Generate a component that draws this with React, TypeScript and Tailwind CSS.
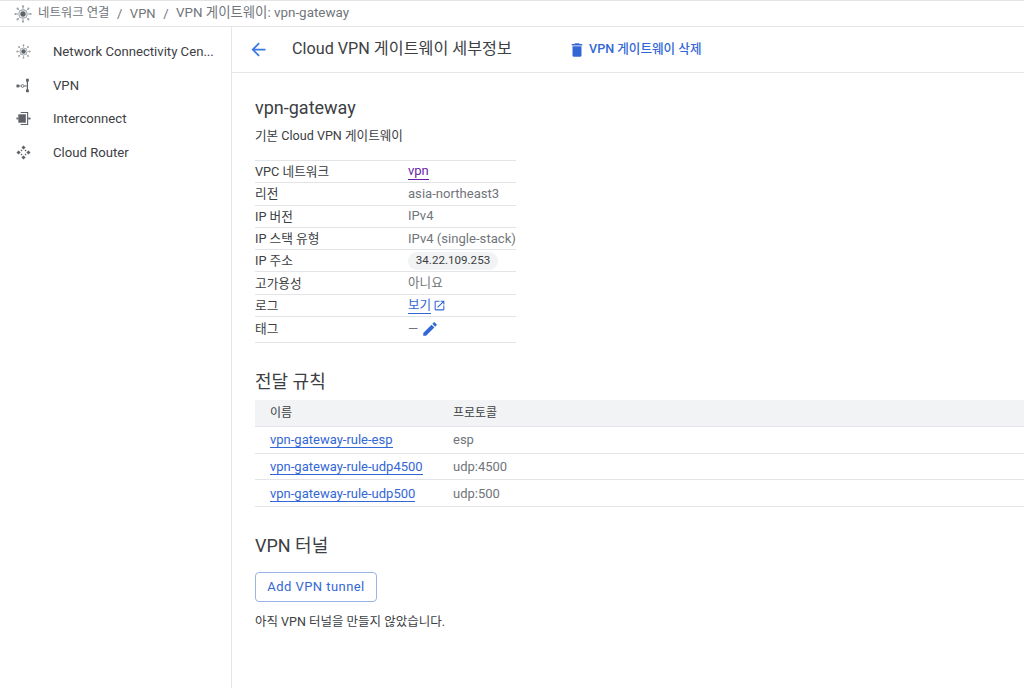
import type { ReactNode } from 'react';

const font = { fontFamily: 'Roboto, "Noto Sans CJK KR", sans-serif' };

function HubIcon({ className }: { className?: string }) {
  return (
    <svg viewBox="0 0 20 20" className={className} fill="none" stroke="currentColor">
      <circle cx="10" cy="10" r="4.6" strokeWidth="1.2" />
      <circle cx="10" cy="10" r="3" fill="#5f6368" stroke="none" />
      <path strokeWidth="1" d="M10 1.5v3M10 15.5v3M1.5 10h3M15.5 10h3M4 4l2.100 2.100M13.900 13.900L16 16M16 4l-2.100 2.100M6.100 13.900L4 16" />
      <g fill="currentColor" stroke="none">
        <circle cx="10" cy="1.6" r="1.2" />
        <circle cx="10" cy="18.4" r="1.2" />
        <circle cx="1.6" cy="10" r="1.2" />
        <circle cx="18.4" cy="10" r="1.2" />
        <circle cx="4" cy="4" r="1.2" />
        <circle cx="16" cy="16" r="1.2" />
        <circle cx="16" cy="4" r="1.2" />
        <circle cx="4" cy="16" r="1.2" />
      </g>
    </svg>
  );
}

function VpnIcon({ className }: { className?: string }) {
  return (
    <svg viewBox="0 0 16 16" className={className} fill="currentColor">
      <rect x="0.5" y="7" width="3" height="3" />
      <path d="M3.5 8h1.500v1H3.500z" />
      <circle cx="7" cy="8.5" r="1.5" fill="none" stroke="currentColor" strokeWidth="0.9" />
      <path d="M8.500 8h3v1h-3z" />
      <rect x="11.5" y="2" width="1.3" height="12" />
      <rect x="10.7" y="0.8" width="3" height="3" />
      <rect x="10.7" y="12.2" width="3" height="3" />
    </svg>
  );
}

function InterconnectIcon({ className }: { className?: string }) {
  return (
    <svg viewBox="0 0 16 16" className={className} fill="currentColor">
      <rect x="2.5" y="3.5" width="8" height="9" />
      <path d="M0.500 7h2v2h-2z" />
      <path d="M5 1h8v14H5v-1.200h6.800V2.200H5z" />
      <path d="M13 7h2.500v2H13z" />
    </svg>
  );
}

function RouterIcon({ className }: { className?: string }) {
  return (
    <svg viewBox="0 0 16 16" className={className} fill="currentColor">
      <path d="M8 .5l2.200 2.200L8 4.900 5.800 2.700zM8 11.100l2.200 2.200L8 15.500l-2.200-2.200zM2.700 5.800L4.900 8l-2.200 2.200L.5 8zM13.300 5.800L15.500 8l-2.200 2.200L11.100 8z" />
      <rect x="5.1" y="5.1" width="1.5" height="1.5" />
      <rect x="9.4" y="5.1" width="1.5" height="1.5" />
      <rect x="5.1" y="9.4" width="1.5" height="1.5" />
      <rect x="9.4" y="9.4" width="1.5" height="1.5" />
    </svg>
  );
}

function BackIcon() {
  return (
    <svg viewBox="0 0 24 24" className="h-[21px] w-[21px]" fill="#3b78e7">
      <path d="M20 11H7.830l5.590-5.590L12 4l-8 8 8 8 1.410-1.410L7.830 13H20v-2z" />
    </svg>
  );
}

function DeleteIcon() {
  return (
    <svg viewBox="0 0 24 24" className="h-[18px] w-[18px]" fill="#3367d6">
      <path d="M6 19c0 1.100.9 2 2 2h8c1.100 0 2-.9 2-2V7H6v12zM19 4h-3.500l-1-1h-5l-1 1H5v2h14V4z" />
    </svg>
  );
}

function OpenIcon() {
  return (
    <svg viewBox="0 0 24 24" className="ml-[2px] h-[13px] w-[13px]" fill="#3367d6">
      <path d="M19 19H5V5h7V3H5c-1.110 0-2 .9-2 2v14c0 1.100.89 2 2 2h14c1.100 0 2-.9 2-2v-7h-2v7zM14 3v2h3.590l-9.830 9.830 1.410 1.410L19 6.410V10h2V3h-7z" />
    </svg>
  );
}

function EditIcon() {
  return (
    <svg viewBox="0 0 24 24" className="ml-[3px] h-[18px] w-[18px]" fill="#3367d6">
      <path d="M3 17.250V21h3.750L17.810 9.940l-3.750-3.750L3 17.250zM20.710 7.040c.39-.39.39-1.020 0-1.410l-2.340-2.340c-.39-.39-1.020-.39-1.410 0l-1.830 1.830 3.750 3.750 1.830-1.830z" />
    </svg>
  );
}

const navItems = [
  { label: 'Network Connectivity Cen...', icon: <HubIcon className="h-[15px] w-[15px] text-[#9aa0a6]" /> },
  { label: 'VPN', icon: <VpnIcon className="h-[15px] w-[15px]" /> },
  { label: 'Interconnect', icon: <InterconnectIcon className="h-[15px] w-[15px]" /> },
  { label: 'Cloud Router', icon: <RouterIcon className="h-[15px] w-[15px]" /> },
];

const rules = [
  { name: 'vpn-gateway-rule-esp', protocol: 'esp' },
  { name: 'vpn-gateway-rule-udp4500', protocol: 'udp:4500' },
  { name: 'vpn-gateway-rule-udp500', protocol: 'udp:500' },
];

function InfoRow({ label, children, tall }: { label: string; children: ReactNode; tall?: boolean }) {
  return (
    <div className={tall ? 'flex h-[26px] items-start border-b border-[#e2e4e8] pt-[2px] text-[13px]' : 'flex h-[22.3px] items-center border-b border-[#e2e4e8] text-[13px]'}>
      <div className="w-[153px] shrink-0 text-[12.7px] text-[#3c4043]">{label}</div>
      <div className="flex min-w-0 items-center whitespace-nowrap text-[#70757a]">{children}</div>
    </div>
  );
}

export default function App() {
  return (
    <div style={font} className="flex h-[688px] w-[1024px] flex-col overflow-hidden bg-white">
      {/* Breadcrumb */}
      <header className="flex h-[27px] shrink-0 items-center border-y border-t-[#e4e4e4] border-b-[#e6e6e6] pl-[14px] text-[13px] text-[#70757a]">
        <HubIcon className="mr-[6px] h-[18px] w-[18px] text-[#9aa0a6]" />
        <span className="text-[12.4px]">네트워크 연결</span>
        <span className="mx-[7.5px]">/</span>
        <span>VPN</span>
        <span className="mx-[7.5px]">/</span>
        <span className="text-[13.4px]">VPN 게이트웨이: vpn-gateway</span>
      </header>

      <div className="flex min-h-0 flex-1">
        {/* Sidebar */}
        <aside className="w-[232px] shrink-0 border-r border-[#e6e6e6] pt-[8px]">
          {navItems.map((item) => (
            <div key={item.label} className="flex h-[33.6px] items-center text-[13.15px] text-[#3c4043]">
              <span className="flex w-[53px] shrink-0 justify-center pr-[6px] text-[#5f6368]">{item.icon}</span>
              <span>{item.label}</span>
            </div>
          ))}
        </aside>

        <main className="min-w-0 flex-1">
          {/* Page title */}
          <div className="flex h-[46px] items-center border-b border-[#e6e6e6] pl-[16px]">
            <BackIcon />
            <h1 className="ml-[23px] w-[276px] text-[16.2px] text-[#3c4043]">Cloud VPN 게이트웨이 세부정보</h1>
            <DeleteIcon />
            <span className="ml-[3px] pb-[1px] text-[12.6px] font-medium text-[#3367d6]">VPN 게이트웨이 삭제</span>
          </div>

          <div className="pl-[23px]">
            <h2 className="mt-[23px] text-[18px] leading-[24px] text-[#3c4043]">vpn-gateway</h2>
            <p className="mt-[8px] text-[12.6px] leading-[16px] text-[#3c4043]">기본 Cloud VPN 게이트웨이</p>

            <div className="mt-[16px] w-[261px] border-t border-[#e2e4e8]">
              <InfoRow label="VPC 네트워크">
                <span className="border-b border-[#681da8] leading-[16px] text-[#681da8]">vpn</span>
              </InfoRow>
              <InfoRow label="리전">
                <span className="text-[13.1px]">asia-northeast3</span>
              </InfoRow>
              <InfoRow label="IP 버전">IPv4</InfoRow>
              <InfoRow label="IP 스택 유형">
                <span className="text-[13.1px]">IPv4 (single-stack)</span>
              </InfoRow>
              <InfoRow label="IP 주소">
                <span className="flex h-[18px] w-[90px] items-center justify-center rounded-full bg-[#f1f3f4] text-[11.6px] text-[#3c4043]">
                  34.22.109.253
                </span>
              </InfoRow>
              <InfoRow label="고가용성">
                <span className="text-[12.6px]">아니요</span>
              </InfoRow>
              <InfoRow label="로그">
                <span className="border-b border-[#3367d6] text-[12.6px] leading-[16px] text-[#3367d6]">보기</span>
                <OpenIcon />
              </InfoRow>
              <InfoRow label="태그" tall>
                <span>—</span>
                <EditIcon />
              </InfoRow>
            </div>

            <h2 className="mt-[27px] text-[18px] leading-[24px] text-[#3c4043]">전달 규칙</h2>

            {/* Forwarding rules */}
            <div className="mt-[6px] text-[13px]">
              <div className="flex h-[27px] items-center border-b border-[#e2e4e8] bg-[#f1f3f4] text-[12px] text-[#3c4043]">
                <span className="w-[198px] pl-[15px]">이름</span>
                <span>프로토콜</span>
              </div>
              {rules.map((rule) => (
                <div key={rule.name} className="flex h-[26.7px] items-center border-b border-[#e2e4e8]">
                  <span className="w-[198px] pl-[15px]">
                    <span className="border-b border-[#3367d6] leading-[16px] text-[#3367d6]">{rule.name}</span>
                  </span>
                  <span className="text-[#70757a]">{rule.protocol}</span>
                </div>
              ))}
            </div>

            <h2 className="mt-[27px] text-[18px] leading-[24px] text-[#3c4043]">VPN 터널</h2>
            <button className="mt-[14px] flex h-[30px] w-[122px] items-center justify-center rounded-[4px] border border-[#9ab4e8] text-[13px] tracking-[0.45px] text-[#3367d6] [font-weight:450]">
              Add VPN tunnel
            </button>
            <p className="mt-[12px] text-[12.5px] leading-[16px] text-[#3c4043]">아직 VPN 터널을 만들지 않았습니다.</p>
          </div>
        </main>
      </div>
    </div>
  );
}
